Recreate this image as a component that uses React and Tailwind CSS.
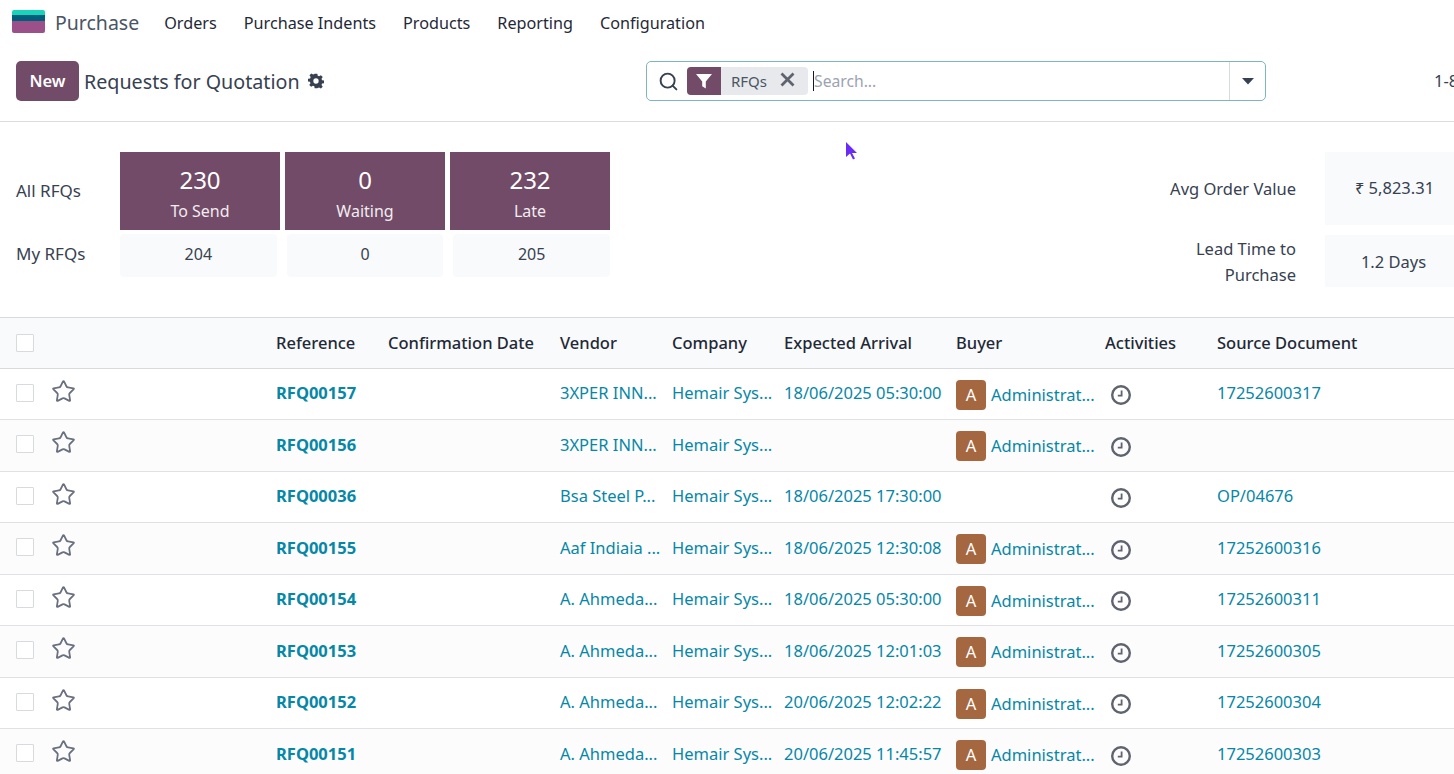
import React from "react";
import { Search, Star } from "lucide-react";

const navItems = ["Orders", "Purchase Indents", "Products", "Reporting", "Configuration"];

const rows = [
  { ref: "RFQ00157", vendor: "3XPER INN...", date: "18/06/2025 05:30:00", buyer: true, source: "17252600317" },
  { ref: "RFQ00156", vendor: "3XPER INN...", date: "", buyer: true, source: "" },
  { ref: "RFQ00036", vendor: "Bsa Steel P...", date: "18/06/2025 17:30:00", buyer: false, source: "OP/04676" },
  { ref: "RFQ00155", vendor: "Aaf Indiaia ...", date: "18/06/2025 12:30:08", buyer: true, source: "17252600316" },
  { ref: "RFQ00154", vendor: "A. Ahmeda...", date: "18/06/2025 05:30:00", buyer: true, source: "17252600311" },
  { ref: "RFQ00153", vendor: "A. Ahmeda...", date: "18/06/2025 12:01:03", buyer: true, source: "17252600305" },
  { ref: "RFQ00152", vendor: "A. Ahmeda...", date: "20/06/2025 12:02:22", buyer: true, source: "17252600304" },
  { ref: "RFQ00151", vendor: "A. Ahmeda...", date: "20/06/2025 11:45:57", buyer: true, source: "17252600303" },
];

const gridCols = "grid grid-cols-[276px_112px_172px_112px_112px_172px_149px_112px_1fr] items-center";

// Odoo style clock used in the activities column
const ClockIcon = () => (
  <svg width="20" height="20" viewBox="0 0 20 20" fill="none" className="text-[#5f636f]">
    <circle cx="10" cy="10" r="8.8" stroke="currentColor" strokeWidth="2.4" />
    <path d="M10.6 5.5v5.2H6.800" stroke="currentColor" strokeWidth="1.8" />
  </svg>
);

const GearIcon = () => (
  <svg width="16" height="16" viewBox="0 0 24 24" className="text-[#374151]">
    <path
      fill="currentColor"
      fillRule="evenodd"
      d="M10 1h4l.6 3.2 2 .8L19.300 3.200l2.800 2.800-1.800 2.700.8 2 3.200.6v4l-3.200.6-.8 2 1.800 2.700-2.800 2.800-2.700-1.800-2 .8L14 23h-4l-.6-3.200-2-.8-2.700 1.800-2.800-2.800 1.800-2.700-.8-2L0 12.700v-4l3.200-.6.8-2L2.200 3.400 5 .6l2.700 1.800 2-.8zM12 8a4 4 0 1 0 0 8 4 4 0 0 0 0-8z"
    />
  </svg>
);

const Checkbox = () => <div className="w-[18px] h-[18px] border border-[#d8dadd] bg-white rounded-[1px]" />;

const StatCard = ({ value, label }) => (
  <div className="w-[160px] h-[78px] pt-2 bg-[#714b67] text-white flex flex-col items-center justify-center">
    <div className="text-[24px] leading-[32px]">{value}</div>
    <div className="text-[16px] leading-[30px] text-[#f1ecf0]">{label}</div>
  </div>
);

const MiniCard = ({ value }) => (
  <div className="w-[157px] h-[43px] pb-1 bg-[#f9fafb] rounded-sm flex items-center justify-center text-[16px] text-[#374151]">
    {value}
  </div>
);

export default function App() {
  return (
    <div
      className="relative w-[1454px] h-[774px] overflow-hidden bg-white text-[#374151] text-[17px]"
      style={{ fontFamily: '"Noto Sans", "Open Sans", sans-serif' }}
    >
      {/* Top navigation */}
      <nav className="h-[46px] flex items-center pl-3">
        <div className="w-[33px] h-[23px] rounded-[2px] overflow-hidden flex flex-col mr-[10px] mb-[3px]">
          <div className="h-[5px] bg-[#1ad3bb]" />
          <div className="h-[6px] bg-[#005e7a]" />
          <div className="flex-1 bg-[#9c5089]" />
        </div>
        <span className="text-[19.500px] text-[#4b5563] mr-[25px]">Purchase</span>
        <div className="flex gap-[27px] text-[#1f2937]">
          {navItems.map((item) => (
            <span key={item} className="text-[16.200px]">{item}</span>
          ))}
        </div>
      </nav>

      {/* Control panel */}
      <div className="h-[76px] border-b border-[#dcdcdc] flex items-start pl-4 pt-[15px] whitespace-nowrap">
        <button className="shrink-0 w-[63px] h-[40px] pt-px bg-[#714b67] rounded-[5px] text-white font-semibold text-[16.500px] mr-[5px]">
          New
        </button>
        <span className="shrink-0 w-[215px] pt-px text-[19.700px] leading-[40px] mr-[9px]">Requests for Quotation</span>
        <span className="shrink-0 h-[40px] flex items-center"><GearIcon /></span>
        <div className="shrink-0 ml-[322px] w-[620px] h-[40px] border border-[#7cb7b9] rounded-[5px] flex items-center">
          <Search size={21} strokeWidth={2.2} className="ml-[11px] mr-[8px] text-[#374151]" />
          <div className="h-[28px] flex items-center bg-[#e7e9ed] rounded-[4px] overflow-hidden">
            <div className="w-[34px] h-full bg-[#714b67] flex items-center justify-center">
              <svg width="16" height="16" viewBox="0 0 16 16"><path d="M0 1h16L9.800 8.500V15.500l-3.600-2.200V8.500z" fill="#fff" /></svg>
            </div>
            <span className="ml-[10px] text-[15px] text-[#4b5563]">RFQs</span>
            <svg width="15" height="15" viewBox="0 0 15 15" className="ml-[13px] mr-[13px] mb-[3px]">
              <path d="M1.500 1.500l12 12M13.500 1.500l-12 12" stroke="#5f636f" strokeWidth="2.800" />
            </svg>
          </div>
          <div className="w-px h-[20px] bg-[#111827] ml-[5px]" />
          <span className="pt-px text-[15.700px] text-[#9ca3af]">Search...</span>
          <div className="ml-auto w-[36px] h-full border-l border-[#d8dadd] flex items-center justify-center">
            <svg width="12" height="7" viewBox="0 0 12 7"><path d="M0 0h12L6 6.500z" fill="#374151" /></svg>
          </div>
        </div>
        <span className="shrink-0 ml-[168px] leading-[40px] text-[16.500px]">1-8 / 230</span>
      </div>

      {/* Dashboard */}
      <div className="h-[196px] pt-[30px] flex border-b border-[#d8dadd]">
        <div className="w-[120px] pl-4 text-[17px]">
          <div className="h-[82px] pb-1 flex items-center">All RFQs</div>
          <div className="h-[43px] pb-1 flex items-center">My RFQs</div>
        </div>
        <div>
          <div className="flex gap-[5px]">
            <StatCard value="230" label="To Send" />
            <StatCard value="0" label="Waiting" />
            <StatCard value="232" label="Late" />
          </div>
          <div className="flex gap-[10px] mt-1 w-[490px]">
            <MiniCard value="204" />
            <MiniCard value="0" />
            <MiniCard value="205" />
          </div>
        </div>
        <div className="ml-auto w-[129px] overflow-hidden">
          <div className="h-[73px] bg-[#f9fafb] flex items-center justify-center text-[16.500px] pl-[10px] whitespace-nowrap">₹ 5,823.31</div>
          <div className="h-[52px] mt-[10px] pt-[2px] pl-[8px] bg-[#f9fafb] flex items-center justify-center text-[16.500px]">1.2 Days</div>
        </div>
      </div>

      {/* The labels of the right hand stats sit left of their boxes */}
      <div className="absolute top-[152px] right-[158px] text-right text-[16.500px] leading-[26px]">
        <div className="h-[73px] flex items-center justify-end">Avg Order Value</div>
        <div className="mt-[11px] h-[52px] flex flex-col justify-center">
          <div>Lead Time to</div>
          <div>Purchase</div>
        </div>
      </div>

      {/* List view */}
      <div className={`${gridCols} h-[50.700px] pt-[2px] bg-[#f9fafb] border-b border-[#d8dadd] font-medium text-[16.500px] text-[#1f2937] whitespace-nowrap`}>
        <div className="pl-4 mb-[2px]"><Checkbox /></div>
        <div>Reference</div>
        <div>Confirmation Date</div>
        <div>Vendor</div>
        <div>Company</div>
        <div>Expected Arrival</div>
        <div>Buyer</div>
        <div>Activities</div>
        <div>Source Document</div>
      </div>
      {rows.map((row, i) => (
        <div
          key={row.ref}
          className={`${gridCols} h-[51.500px] border-b border-[#dfe1e5] text-[16.500px] text-[#0787a6] whitespace-nowrap ${i % 2 === 1 ? "bg-[#fcfcfd]" : "bg-white"}`}
        >
          <div className="pl-4 flex items-center gap-[17px]">
            <div className="mb-[2px]"><Checkbox /></div>
            <Star size={25} strokeWidth={1.7} className="text-[#6b7080] mb-[5px]" />
          </div>
          <div className="font-bold mb-px">{row.ref}</div>
          <div />
          <div className="mb-px">{row.vendor}</div>
          <div className="mb-px">Hemair Sys...</div>
          <div className="mb-px">{row.date}</div>
          <div className="flex items-center mt-[2px]">
            {row.buyer && (
              <>
                <div className="w-[30px] h-[30px] rounded-[4px] bg-[#a5673f] text-white flex items-center justify-center text-[16.500px] mr-[5px]">A</div>
                <span>Administrat...</span>
              </>
            )}
          </div>
          <div className="pl-[6px] mt-[3px]"><ClockIcon /></div>
          <div className="mb-px">{row.source}</div>
        </div>
      ))}

      {/* Mouse pointer caught in the screenshot */}
      <svg width="14" height="20" viewBox="0 0 14 20" className="absolute left-[845px] top-[141px]">
        <path d="M1 1v15l4-3.500 3 6 2-1-3-5.500h5z" fill="#6a2cf5" />
      </svg>
    </div>
  );
}
